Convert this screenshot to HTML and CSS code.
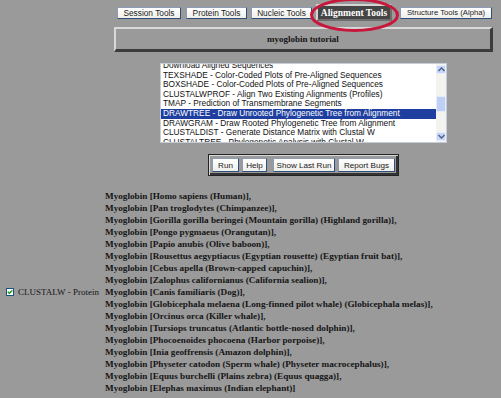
FILE: index.html
```html
<!DOCTYPE html>
<html>
<head>
<meta charset="utf-8">
<title>Alignment Tools</title>
<link rel="stylesheet" href="styles.css">
</head>
<body>
<svg class="ring" width="501" height="40" viewBox="0 0 501 40"><ellipse cx="354.5" cy="15" rx="43" ry="15.5" fill="none" stroke="#c8173c" stroke-width="3"/></svg>
<div class="top">
  <div class="tabs">
    <span class="tab tab-session">Session Tools</span>
    <span class="tab tab-protein">Protein Tools</span>
    <span class="tab tab-nucleic">Nucleic Tools</span>
    <span class="tab-active">Alignment Tools</span>
    <span class="tab tab-structure">Structure Tools (Alpha)</span>
  </div>
  <div class="title">myoglobin tutorial</div>
  <div class="listbox">
    <ul class="options">
      <li>Download Aligned Sequences</li>
      <li>TEXSHADE - Color-Coded Plots of Pre-Aligned Sequences</li>
      <li>BOXSHADE - Color-Coded Plots of Pre-Aligned Sequences</li>
      <li>CLUSTALWPROF - Align Two Existing Alignments (Profiles)</li>
      <li>TMAP - Prediction of Transmembrane Segments</li>
      <li class="selected">DRAWTREE - Draw Unrooted Phylogenetic Tree from Alignment</li>
      <li>DRAWGRAM - Draw Rooted Phylogenetic Tree from Alignment</li>
      <li>CLUSTALDIST - Generate Distance Matrix with Clustal W</li>
      <li>CLUSTALTREE - Phylogenetic Analysis with Clustal W</li>
    </ul>
    <div class="scrollbar">
      <span class="sb-btn"><svg width="7" height="5" viewBox="0 0 7 5"><path d="M0.5 4 L3.5 1 L6.5 4" fill="none" stroke="#4d6185" stroke-width="1.4"/></svg></span>
      <span class="sb-track"><span class="sb-thumb"></span></span>
      <span class="sb-btn"><svg width="7" height="5" viewBox="0 0 7 5"><path d="M0.5 1 L3.5 4 L6.5 1" fill="none" stroke="#4d6185" stroke-width="1.4"/></svg></span>
    </div>
  </div>
  <div class="actions">
    <span class="btn btn-run">Run</span>
    <span class="btn btn-help">Help</span>
    <span class="btn btn-last">Show Last Run</span>
    <span class="btn btn-bugs">Report Bugs</span>
  </div>
</div>
<div class="tool-row">
  <div class="tool-label"><span class="check"><svg width="6" height="6" viewBox="0 0 6 6"><path d="M0.8 2.8 L2.4 4.4 L5.3 1.2" fill="none" stroke="#21a121" stroke-width="1.5"/></svg></span>CLUSTALW - Protein</div>
  <div class="seqs">
    <div>Myoglobin [Homo sapiens (Human)],</div>
    <div>Myoglobin [Pan troglodytes (Chimpanzee)],</div>
    <div>Myoglobin [Gorilla gorilla beringei (Mountain gorilla) (Highland gorilla)],</div>
    <div>Myoglobin [Pongo pygmaeus (Orangutan)],</div>
    <div>Myoglobin [Papio anubis (Olive baboon)],</div>
    <div>Myoglobin [Rousettus aegyptiacus (Egyptian rousette) (Egyptian fruit bat)],</div>
    <div>Myoglobin [Cebus apella (Brown-capped capuchin)],</div>
    <div>Myoglobin [Zalophus californianus (California sealion)],</div>
    <div>Myoglobin [Canis familiaris (Dog)],</div>
    <div>Myoglobin [Globicephala melaena (Long-finned pilot whale) (Globicephala melas)],</div>
    <div>Myoglobin [Orcinus orca (Killer whale)],</div>
    <div>Myoglobin [Tursiops truncatus (Atlantic bottle-nosed dolphin)],</div>
    <div>Myoglobin [Phocoenoides phocoena (Harbor porpoise)],</div>
    <div>Myoglobin [Inia geoffrensis (Amazon dolphin)],</div>
    <div>Myoglobin [Physeter catodon (Sperm whale) (Physeter macrocephalus)],</div>
    <div>Myoglobin [Equus burchelli (Plains zebra) (Equus quagga)],</div>
    <div>Myoglobin [Elephas maximus (Indian elephant)]</div>
  </div>
</div>
</body>
</html>
```

FILE: styles.css
```css
html, body {
  margin: 0;
  padding: 0;
}
body {
  background: #9a9a9a;
  font-family: "Liberation Serif", serif;
  color: #151515;
  width: 501px;
  height: 398px;
  overflow: hidden;
  position: relative;
}
.ring {
  position: absolute;
  left: 0;
  top: 0;
  z-index: 2;
  pointer-events: none;
}
.top {
  margin-left: 114px;
  width: 379px;
}
.tabs {
  display: flex;
  align-items: center;
  height: 22px;
  padding-top: 3px;
  box-sizing: border-box;
}
.tab, .btn {
  box-sizing: border-box;
  height: 12px;
  display: flex;
  align-items: center;
  justify-content: center;
  font-family: "Liberation Sans", Arial, sans-serif;
  font-size: 8.3px;
  color: #1a1a1a;
  background: linear-gradient(#ffffff, #efeee9);
  border: 1px solid #2d4f7c;
  border-top-color: #8a9bb3;
  border-left-color: #8a9bb3;
  border-radius: 1px;
  white-space: nowrap;
}
.tab-session { width: 64px; margin-left: 3px; }
.tab-protein { width: 61px; margin-left: 5px; }
.tab-nucleic { width: 61px; margin-left: 4px; }
.tab-structure { width: 92px; margin-left: 8px; font-size: 7.7px; }
.tab-active {
  box-sizing: border-box;
  width: 76px;
  height: 17px;
  margin-left: 4px;
  display: flex;
  align-items: center;
  justify-content: center;
  background: #454545;
  color: #ffffff;
  font-weight: bold;
  font-size: 9.5px;
  border: 2px solid;
  border-color: #d4d4d4 #6e6e6e #6e6e6e #d4d4d4;
  white-space: nowrap;
}
.title {
  box-sizing: border-box;
  margin-top: 5px;
  height: 25px;
  border-style: solid;
  border-width: 2px 3px 3px 2px;
  border-color: #d9d9d9 #3c3c3c #3c3c3c #d9d9d9;
  display: flex;
  align-items: center;
  justify-content: center;
  font-weight: bold;
  font-size: 9px;
}
.listbox {
  box-sizing: border-box;
  margin: 11px auto 0;
  width: 287px;
  height: 80px;
  background: #ffffff;
  border: 1px solid #c7cdd6;
  display: flex;
  overflow: hidden;
}
.options {
  flex: 1;
  list-style: none;
  margin: -3px 0 0;
  padding: 0;
  font-family: "Liberation Sans", Arial, sans-serif;
  font-size: 8.3px;
  color: #111;
}
.options li {
  height: 9.6px;
  line-height: 9.6px;
  padding-left: 2px;
  white-space: nowrap;
}
.options .selected {
  background: #1e3fa0;
  color: #ffffff;
}
.scrollbar {
  width: 10px;
  display: flex;
  flex-direction: column;
  background: #f3f3ef;
  padding: 1px 0;
}
.sb-btn {
  box-sizing: border-box;
  height: 9px;
  display: flex;
  align-items: center;
  justify-content: center;
  background: #c6d5f8;
  border: 1px solid #e8eefc;
  border-radius: 1px;
}
.sb-track {
  flex: 1;
  display: flex;
  flex-direction: column;
  justify-content: flex-end;
  padding-bottom: 20px;
}
.sb-thumb {
  height: 16px;
  background: #bfd0f7;
  border: 1px solid #e6ecfb;
  border-radius: 1px;
  box-sizing: border-box;
}
.actions {
  box-sizing: border-box;
  margin: 11px auto 0;
  width: 191px;
  height: 22px;
  display: flex;
  align-items: center;
  padding-left: 3px;
  border: 1px solid #222;
  box-shadow: inset 1px 1px 0 #d8d8d8, inset -2px -2px 0 #333;
}
.btn { height: 14px; font-size: 8.1px; }
.btn-run { width: 27px; }
.btn-help { width: 25px; margin-left: 3px; }
.btn-last { width: 62px; margin-left: 6px; }
.btn-bugs { width: 57px; margin-left: 3px; }
.tool-row {
  display: flex;
  align-items: center;
  margin-top: 14px;
}
.tool-label {
  box-sizing: border-box;
  width: 105px;
  padding-left: 6px;
  white-space: nowrap;
  font-size: 9px;
  display: flex;
  align-items: center;
}
.check {
  box-sizing: border-box;
  width: 8px;
  height: 8px;
  border: 1px solid #1c5180;
  background: #ffffff;
  margin-right: 4px;
  display: flex;
  align-items: center;
  justify-content: center;
  flex: none;
}
.seqs {
  font-weight: bold;
  font-size: 9.2px;
  line-height: 12px;
  white-space: nowrap;
}
```
